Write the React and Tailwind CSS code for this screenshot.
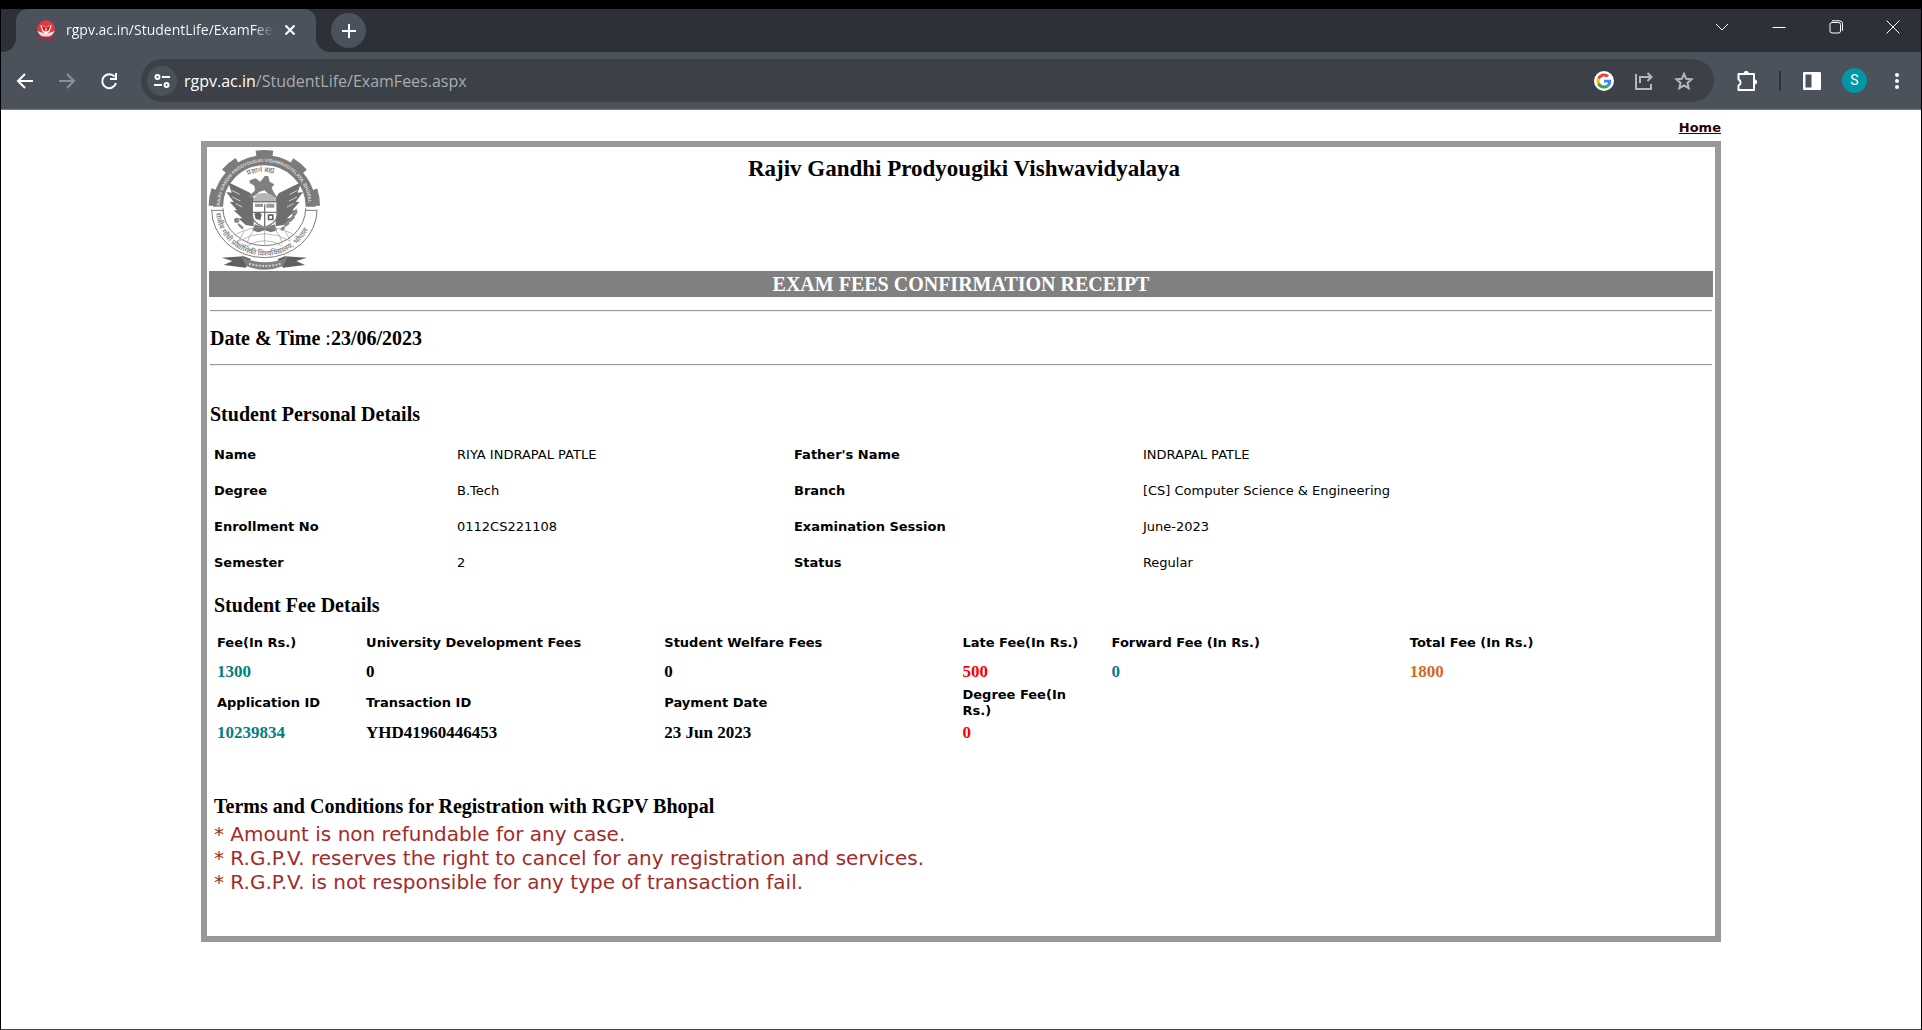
import React from "react";

const serif = "font-['Liberation_Serif',serif]";

function Favicon() {
  return (
    <svg width="20" height="20" viewBox="0 0 60 60" aria-hidden="true">
      <circle cx="30" cy="27" r="26" fill="#e8383f" />
      <path d="M4 32a27 25 0 0 0 52 0c-7 4-15 6-26 6S11 36 4 32z" fill="#f3d9da" />
      <path d="M13 16l12 2 5 10 5-10 12-2-6 18-11 8-11-8z" fill="#fff" />
      <path d="M17 16l10 6 2 14-8-6zM43 16l-10 6-2 14 8-6z" fill="#d9141c" />
      <path d="M8 56l10-3h24l10 3" fill="none" stroke="#c4232a" strokeWidth="5" />
    </svg>
  );
}

function Crest() {
  return (
    <svg width="112" height="122" viewBox="44 42 336 366" className="overflow-visible" role="img" aria-label="University crest">
      <defs>
        <path id="crest-top" d="M77 214A133 133 0 0 1 343 214" />
        <path id="crest-bottom" d="M64 224A146 138 0 0 0 356 224" />
        <path id="crest-motto" d="M154 122Q210 100 272 122" />
      </defs>
      <g fill="none" stroke="#7b7b7b">
        <path d="M71 215A139 139 0 1 1 349 215" strokeWidth="30" />
        <path d="M54 212A156 156 0 0 1 366 212" strokeWidth="22" strokeDasharray="50 60" />
        <path d="M52 224A158 144 0 0 0 368 224" strokeWidth="3" />
        <path d="M86 220A124 112 0 0 0 334 220" strokeWidth="3" />
        <path d="M52 226H86M334 226H368" strokeWidth="3" />
      </g>
      <text fill="#dddddd" fontSize="14" fontWeight="700" fontFamily="'Liberation Sans', sans-serif">
        <textPath href="#crest-top" startOffset="2">RAJIV GANDHI PRODYOUGIKI VISHWAVIDYALAYA, BHOPAL</textPath>
      </text>
      <text fill="#858585" fontSize="22" fontWeight="600" fontFamily="'Noto Sans', sans-serif">
        <textPath href="#crest-bottom" startOffset="10">राजीव गाँधी प्रौद्योगिकी विश्वविद्यालय, भोपाल</textPath>
      </text>
      <text fill="#858585" fontSize="21" fontWeight="600" fontFamily="'Noto Sans', sans-serif">
        <textPath href="#crest-motto" startOffset="6">प्रज्ञानं ब्रह्म</textPath>
      </text>
      <g fill="#6e6e6e">
        <path d="M102 142l66 32 10 16v84l-24-4-22-20 12 0-26-24 10 0-22-26 12 1-22-30 16 2z" />
        <path d="M320 142l-66 32-10 16v84l24-4 22-20-12 0 26-24-10 0 22-26-12 1 22-30-16 2z" />
      </g>
      <g stroke="#fff" strokeWidth="2" fill="none">
        <path d="M112 166l24 12M114 186l24 12M124 206l20 10M310 166l-24 12M308 186l-24 12M298 206l-20 10" />
      </g>
      <g fill="#808080">
        <path d="M166 136l18-6 14 10 14-18 10 2 4 16 14 8-8 10 6 14 10 14-10 4-16-14-12-10-14 4-12 10-16 10-4-6 18-18-2-14-14-8z" />
        <path d="M178 194q4-20 32-20t34 20l-6 6h-56z" fill="#b5b5b5" />
      </g>
      <path d="M174 200h74v42q0 20-37 36-37-16-37-36z" fill="#fff" stroke="#777" strokeWidth="4" />
      <path d="M176 200h70M211 208v68M176 232h70" stroke="#777" strokeWidth="4" />
      <path d="M182 206h24v10h-24zM216 206h24v12h-24z" fill="#999" />
      <path d="M180 236l12-6 10 8-4 18-14-4zM220 238h18v18h-18z" fill="#666" />
      <path d="M225 243h8v8h-8z" fill="#fff" />
      <path d="M182 268l29 12 29-12 8 18-18 6-19-6-19 6-18-6z" fill="#777" />
      <g fill="none" stroke="#999" strokeWidth="2">
        <path d="M120 300q90-48 182 0M134 318q77-44 154 0M160 332q50-30 102 0M211 278v54M180 282q-18 22-22 44M242 282q18 22 22 44M150 288l-16 28M272 288l16 28" />
      </g>
      <g fill="#888">
        <circle cx="127" cy="256" r="8" />
        <path d="M132 264l16 12-4 8-14-14z" />
        <path d="M268 270l14-14 4 10-12 10zM280 258l16-20 6 10-14 14zM292 238l14-18 4 12-10 14zM258 280l12-8 2 10-10 6z" />
      </g>
      <path d="M82 368l66-4 22 8-16 26-66-8 26-12zM338 368l-66-4-22 8 16 26 66-8-26-12z" fill="#606060" />
      <path d="M142 365q70 34 138 0l-14 28q-54 22-110 0z" fill="#808080" />
      <path d="M164 386q48 14 96 0" fill="none" stroke="#cccccc" strokeWidth="6" strokeDasharray="6 4" />
    </svg>
  );
}

function GoogleMark() {
  return (
    <svg width="20" height="20" viewBox="0 0 48 48" aria-hidden="true">
      <circle cx="24" cy="24" r="24" fill="#fff" />
      <g transform="translate(6 6) scale(.75)">
        <path fill="#EA4335" d="M24 9.500c3.500 0 6.700 1.200 9.200 3.600l6.900-6.900C35.900 2.400 30.500 0 24 0 14.600 0 6.500 5.400 2.600 13.200l8 6.200C12.400 13.700 17.700 9.500 24 9.500z" />
        <path fill="#4285F4" d="M47 24.500c0-1.600-.2-3.100-.4-4.500H24v9h12.900c-.6 3-2.200 5.500-4.700 7.200l7.700 6C44.400 38 47 31.800 47 24.500z" />
        <path fill="#FBBC05" d="M10.500 28.600c-.5-1.500-.8-3-.8-4.600s.3-3.100.8-4.600l-8-6.200C.9 16.500 0 20.100 0 24s.9 7.500 2.600 10.800z" />
        <path fill="#34A853" d="M24 48c6.500 0 11.900-2.100 15.900-5.800l-7.700-6c-2.200 1.500-4.900 2.300-8.200 2.300-6.300 0-11.600-4.200-13.500-9.900l-8 6.200C6.500 42.600 14.600 48 24 48z" />
      </g>
    </svg>
  );
}

function Icon({ size = 20, children, className = "text-white", width = 2 }) {
  return (
    <svg width={size} height={size} viewBox={`0 0 ${size} ${size}`} fill="none" stroke="currentColor" strokeWidth={width} className={className} aria-hidden="true">
      {children}
    </svg>
  );
}

function IconButton({ label, className = "", children }) {
  return (
    <button type="button" aria-label={label} className={`flex shrink-0 items-center justify-center ${className}`}>
      {children}
    </button>
  );
}

function TabStrip() {
  return (
    <div className="flex h-[43px] bg-[#2e3038]">
      <div className="flex w-[15px] bg-[#4b525c]">
        <div className="flex-1 rounded-br-[14px] bg-[#2e3038]" />
      </div>
      <div className="flex w-[300px] items-center rounded-t-xl bg-[#4b525c] pb-[2px] pl-5">
        <Favicon />
        <span className="ml-[10px] w-[208px] overflow-hidden whitespace-nowrap bg-gradient-to-r from-white from-90% to-transparent bg-clip-text text-[14px] leading-6 text-transparent">
          rgpv.ac.in/StudentLife/ExamFees.aspx
        </span>
        <IconButton label="Close tab" className="ml-1 size-6">
          <Icon size={12}><path d="M1.500 1.500l9 9M10.500 1.500l-9 9" /></Icon>
        </IconButton>
      </div>
      <div className="w-[15px] bg-[#4b525c]">
        <div className="h-full rounded-bl-[14px] bg-[#2e3038]" />
      </div>
      <IconButton label="New tab" className="mt-1 size-[35px] rounded-full bg-[#4b525c]">
        <Icon size={16}><path d="M8 1v14M1 8h14" /></Icon>
      </IconButton>
      <div className="ml-auto flex h-9 items-center">
        <IconButton label="Search tabs" className="h-9 w-[57px]">
          <Icon size={14} width={1}><path d="M1 4l6 6 6-6" /></Icon>
        </IconButton>
        <IconButton label="Minimize" className="h-9 w-[57px]">
          <Icon size={14} width={1}><path d="M.5 7.500h13" /></Icon>
        </IconButton>
        <IconButton label="Restore" className="h-9 w-[57px]">
          <Icon size={14} width={1}>
            <rect x="1" y="2.500" width="10.500" height="10.500" rx="2" />
            <path d="M3 .8h7.500a3 3 0 0 1 3 3v7" />
          </Icon>
        </IconButton>
        <IconButton label="Close window" className="h-9 w-[57px]">
          <Icon size={14} width={1}><path d="M.5.500l13 13M13.500.500l-13 13" /></Icon>
        </IconButton>
      </div>
    </div>
  );
}

function Toolbar() {
  return (
    <div className="flex h-[58px] items-center border-b border-[#74787f] bg-[#4b525c] pr-[14px]">
      <IconButton label="Back" className="ml-3 size-6">
        <Icon size={18}><path d="M17 9H2M9 2L2 9l7 7" /></Icon>
      </IconButton>
      <IconButton label="Forward" className="ml-[18px] size-6">
        <Icon size={18} className="text-[#8d9196]"><path d="M1 9h15M9 2l7 7-7 7" /></Icon>
      </IconButton>
      <IconButton label="Reload" className="ml-[18px] size-6">
        <Icon size={18}>
          <path d="M16 11a7 7 0 1 1-1.500-6.500" />
          <path d="M16 1v6h-6" />
        </Icon>
      </IconButton>
      <div className="ml-5 flex h-[43px] flex-1 items-center rounded-full bg-[#3c4047] pr-5 pl-[6px]">
        <IconButton label="Site information" className="size-[30px] rounded-full bg-[#4b525c]">
          <Icon size={16}>
            <circle cx="3.500" cy="4" r="2" />
            <path d="M8 4h8M0 12h8" />
            <circle cx="12.500" cy="12" r="2" />
          </Icon>
        </IconButton>
        <div role="textbox" aria-label="Address" className="ml-[7px] flex-1 text-[16px] leading-6 text-[#a9acb0]">
          <span className="text-white">rgpv.ac.in</span>/StudentLife/ExamFees.aspx
        </div>
        <IconButton label="Google Lens" className="size-5"><GoogleMark /></IconButton>
        <IconButton label="Share" className="ml-5 size-5">
          <Icon size={20} className="text-[#b4b6b9]">
            <path d="M2 3v15h15v-5" />
            <path d="M6 12V6h11M13.500 2l4 4-4 4" />
          </Icon>
        </IconButton>
        <IconButton label="Bookmark" className="ml-5 size-5">
          <Icon size={20} className="text-[#b4b6b9]">
            <path d="M10 2.800l2.200 5 5.300.5-4 3.600 1.200 5.300-4.700-2.800-4.700 2.800 1.200-5.300-4-3.600 5.300-.5z" />
          </Icon>
        </IconButton>
      </div>
      <IconButton label="Extensions" className="ml-[22px] size-[22px]">
        <Icon size={22}>
          <path d="M2.500 4H18v16H2.500v-4.500a3.200 3.200 0 0 0 0-6z" strokeLinejoin="round" />
          <path d="M8 3.500a2.200 2.200 0 0 1 4.400 0zM18.500 9.800a2.200 2.200 0 0 1 0 4.400z" fill="currentColor" stroke="currentColor" strokeWidth="1" />
        </Icon>
      </IconButton>
      <div className="ml-[21px] h-5 w-[2px] bg-[#30333a]" />
      <IconButton label="Side panel" className="ml-[22px] size-[18px]">
        <svg width="18" height="18" viewBox="0 0 18 18" aria-hidden="true">
          <rect width="18" height="18" rx="1" fill="#fff" />
          <rect x="2.500" y="2.500" width="6" height="13" fill="#4b525c" />
        </svg>
      </IconButton>
      <button type="button" aria-label="Profile" className="ml-[21px] size-[25px] rounded-full bg-[#0097a7] text-center font-[Roboto,sans-serif] text-[14px] leading-[25px] text-white">S</button>
      <IconButton label="Menu" className="ml-5 h-5 w-5">
        <svg width="4" height="16" viewBox="0 0 4 16" fill="#fff" aria-hidden="true">
          <circle cx="2" cy="2" r="2" /><circle cx="2" cy="8" r="2" /><circle cx="2" cy="14" r="2" />
        </svg>
      </IconButton>
    </div>
  );
}

const personal = [
  ["Name", "RIYA INDRAPAL PATLE", "Father's Name", "INDRAPAL PATLE"],
  ["Degree", "B.Tech", "Branch", "[CS] Computer Science & Engineering"],
  ["Enrollment No", "0112CS221108", "Examination Session", "June-2023"],
  ["Semester", "2", "Status", "Regular"],
];

const terms = [
  "* Amount is non refundable for any case.",
  "* R.G.P.V. reserves the right to cancel for any registration and services.",
  "* R.G.P.V. is not responsible for any type of transaction fail.",
];

function Rule() {
  return <hr className="mx-px h-[2px] border-t border-b border-t-[#9a9a9a] border-b-[#eeeeee]" />;
}

function Cells({ head, items, colors = [] }) {
  const Tag = head ? "th" : "td";
  return items.map((text, i) => (
    <Tag
      key={i}
      className={
        head
          ? "p-0 pr-5 text-left align-middle font-bold"
          : `p-0 text-left font-['Liberation_Serif',serif] text-[17px] leading-5 font-bold ${colors[i] || "text-black"}`
      }
    >
      {text}
    </Tag>
  ));
}

function Receipt() {
  return (
    <main className="border-[6px] border-[#999999] p-[2px] pb-[42px]">
      <header className="flex h-[122px]">
        <div className="w-[118px] shrink-0"><Crest /></div>
        <h1 className={`${serif} flex-1 pt-[6px] pr-[112px] text-center text-[23px] leading-7 font-bold`}>
          Rajiv Gandhi Prodyougiki Vishwavidyalaya
        </h1>
      </header>
      <h2 className={`${serif} mb-[13px] h-[26px] bg-[#808080] text-center text-[20px] leading-[26px] font-bold text-white`}>
        EXAM FEES CONFIRMATION RECEIPT
      </h2>
      <Rule />
      <p className={`${serif} my-[14px] ml-px text-[20px] leading-6`}>
        <b>Date &amp; Time</b> :<b>23/06/2023</b>
      </p>
      <Rule />
      <h3 className={`${serif} mt-9 ml-px text-[20px] leading-6 font-bold`}>Student Personal Details</h3>
      <div className="pr-2 pl-[5px]">
        <table className="mt-[11px] w-full table-fixed border-collapse text-[13px] leading-4">
          <colgroup>
            <col className="w-[16.3%]" />
            <col className="w-[22.6%]" />
            <col className="w-[23.4%]" />
            <col />
          </colgroup>
          <tbody>
            {personal.map(([a, b, c, d]) => (
              <tr key={a} className="h-9">
                <th scope="row" className="p-0 text-left font-bold">{a}</th>
                <td className="p-0">{b}</td>
                <th scope="row" className="p-0 text-left font-bold">{c}</th>
                <td className="p-0">{d}</td>
              </tr>
            ))}
          </tbody>
        </table>
        <h3 className={`${serif} mt-3 text-[20px] leading-6 font-bold`}>Student Fee Details</h3>
        <table className="mt-[10px] ml-[3px] w-full table-fixed border-collapse text-[13px] leading-4">
          <colgroup>
            <col className="w-[10%]" />
            <col className="w-[20%]" />
            <col className="w-[20%]" />
            <col className="w-[10%]" />
            <col className="w-[20%]" />
            <col className="w-[20%]" />
          </colgroup>
          <tbody>
            <tr className="h-8 whitespace-nowrap">
              <Cells head items={["Fee(In Rs.)", "University Development Fees", "Student Welfare Fees", "Late Fee(In Rs.)", "Forward Fee (In Rs.)", "Total Fee (In Rs.)"]} />
            </tr>
            <tr className="h-[26px]">
              <Cells items={["1300", "0", "0", "500", "0", "1800"]} colors={["text-[#008080]", "", "", "text-[#ff0000]", "text-[#008080]", "text-[#d2691e]"]} />
            </tr>
            <tr className="h-9">
              <Cells head items={["Application ID", "Transaction ID", "Payment Date", "Degree Fee(In Rs.)", "", ""]} />
            </tr>
            <tr className="h-6">
              <Cells items={["10239834", "YHD41960446453", "23 Jun 2023", "0", "", ""]} colors={["text-[#008080]", "", "", "text-[#ff0000]"]} />
            </tr>
          </tbody>
        </table>
        <h3 className={`${serif} mt-[49px] text-[20px] leading-6 font-bold`}>
          Terms and Conditions for Registration with RGPV Bhopal
        </h3>
        <ul className="mt-1 text-[20px] leading-6 text-[#a52a2a]">
          {terms.map((t) => <li key={t}>{t}</li>)}
        </ul>
      </div>
    </main>
  );
}

export default function App() {
  return (
    <div className="min-h-screen border-x border-t-[9px] border-b border-x-black border-t-black border-b-[#444444] bg-white text-black">
      <div className="font-['Open_Sans',sans-serif]">
        <TabStrip />
        <Toolbar />
      </div>
      <div className="px-[200px] pt-[10px] font-['DejaVu_Sans',sans-serif]">
        <nav className="mb-[5px] flex justify-end text-[13px] leading-4 font-bold">
          <a href="#home" className="text-[#330000] underline">Home</a>
        </nav>
        <Receipt />
      </div>
    </div>
  );
}
